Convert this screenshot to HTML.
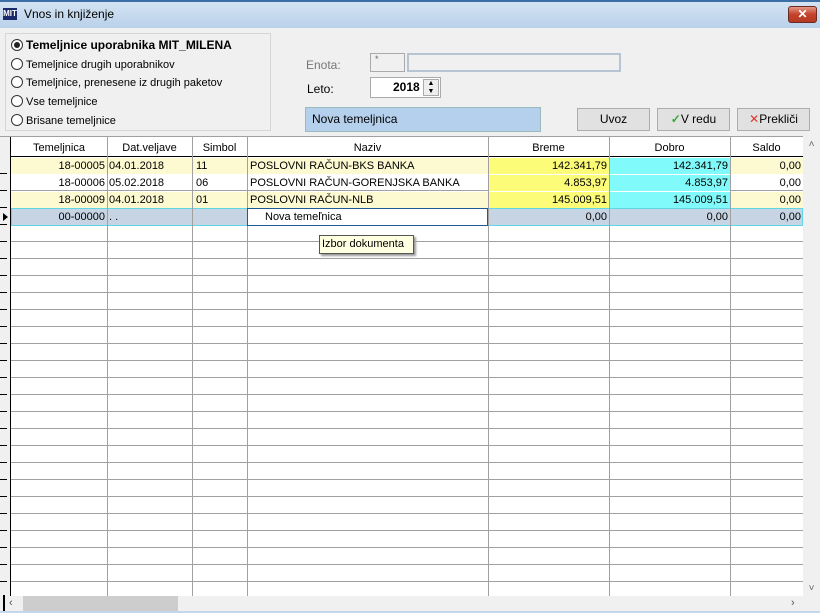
<!DOCTYPE html>
<html><head><meta charset="utf-8"><style>
*{margin:0;padding:0;box-sizing:border-box}
body{width:820px;height:613px;overflow:hidden;background:#f0f0f0;font-family:"Liberation Sans",sans-serif;font-size:11px;color:#000;position:relative}
.a{position:absolute}
.title{left:0;top:0;width:820px;height:28px;background:linear-gradient(#d4e3f3,#b9d1ea);border-top:2px solid #3a6ea5}
.grid{left:0;top:136px;width:803px;height:460px;background:#fff repeating-linear-gradient(to bottom,transparent 0,transparent 21px,#a0a0a0 21px,#a0a0a0 22px,transparent 22px,transparent 22px);}
.vl{position:absolute;top:136px;height:460px;width:1px;background:#a0a0a0}
.hl{position:absolute;left:11px;width:792px;height:1px;background:#a0a0a0}
.cell{position:absolute;height:16px;line-height:16px;white-space:nowrap;overflow:hidden;padding:0 2px}
.r{text-align:right}
.btn{position:absolute;top:108px;height:23px;background:#e1e1e1;border:1px solid #adadad;text-align:center;line-height:21px;font-size:12px}
.rad{position:absolute;left:11px;font-size:11px;line-height:13px}
.rad i{display:inline-block;width:12px;height:12px;border:1px solid #333;border-radius:50%;vertical-align:-2px;margin-right:3px;background:#fff;position:relative}
</style></head><body>
<div class="a title"></div>
<div class="a" style="left:3px;top:8px;width:14px;height:12px;background:#1a2a6c;color:#fff;font-size:8px;font-weight:bold;line-height:12px;text-align:center">MIT</div>
<div class="a" style="left:24px;top:7px;font-size:12px">Vnos in knjiženje</div>
<div class="a" style="left:788px;top:6px;width:29px;height:17px;border-radius:3px;border:1px solid #6b2a22;background:linear-gradient(#e39a88,#c4412b 50%,#b53a22);color:#fff;text-align:center;font-size:12px;font-weight:bold;line-height:15px">✕</div>

<div class="a" style="left:5px;top:33px;width:266px;height:98px;border:1px solid #d5d5d5;"></div>
<div class="rad" style="top:39px;font-weight:bold;font-size:12px"><i><b style="position:absolute;left:2px;top:2px;width:6px;height:6px;border-radius:50%;background:#222"></b></i>Temeljnice uporabnika MIT_MILENA</div>
<div class="rad" style="top:58px"><i></i>Temeljnice drugih uporabnikov</div>
<div class="rad" style="top:76px"><i></i>Temeljnice, prenesene iz drugih paketov</div>
<div class="rad" style="top:95px"><i></i>Vse temeljnice</div>
<div class="rad" style="top:114px"><i></i>Brisane temeljnice</div>

<div class="a" style="left:306px;top:58px;color:#777;font-size:12px">Enota:</div>
<div class="a" style="left:370px;top:53px;width:35px;height:19px;border:1px solid #aaa;background:#f0f0f0;color:#666;font-size:9px;padding-left:4px">*</div>
<div class="a" style="left:407px;top:53px;width:214px;height:19px;border:2px solid #b7c4d4;background:#f0f0f0"></div>
<div class="a" style="left:307px;top:82px;font-size:12px">Leto:</div>
<div class="a" style="left:370px;top:77px;width:71px;height:21px;border:1px solid #aaa;background:#fff;font-weight:bold;font-size:12px;line-height:19px;padding-left:22px">2018</div>
<div class="a" style="left:423px;top:79px;width:16px;height:17px;border:1px solid #aaa;background:#eee;font-size:7px;line-height:8px;text-align:center">▲<br>▼</div>
<div class="a" style="left:305px;top:107px;width:236px;height:25px;background:#b4d0ec;border:1px solid #9bb;font-size:12px;line-height:23px;padding-left:6px">Nova temeljnica</div>
<div class="btn" style="left:577px;width:73px">Uvoz</div>
<div class="btn" style="left:657px;width:73px"><span style="color:#3a3;font-weight:bold">✓</span>V redu</div>
<div class="btn" style="left:737px;width:73px"><span style="color:#e2342a">✕</span>Prekliči</div>

<!-- grid -->
<div class="a" style="left:0;top:136px;width:803px;height:460px;background:#fff;border-top:1px solid #a0a0a0"></div>
<div class="a" style="left:0;top:137px;width:11px;height:459px;background:#f0f0f0;border-right:1px solid #000"></div>
<div class="a" style="left:11px;top:157px;width:792px;height:439px;background:repeating-linear-gradient(to bottom,transparent 0,transparent 16px,#a0a0a0 16px,#a0a0a0 17px)"></div>
<div class="a" style="left:0;top:157px;width:7px;height:439px;background:repeating-linear-gradient(to bottom,transparent 0,transparent 16px,#000 16px,#000 17px)"></div>
<div class="a" style="left:11px;top:156px;width:792px;height:1px;background:#000"></div>
<div class="vl" style="left:107px"></div><div class="vl" style="left:192px"></div><div class="vl" style="left:247px"></div><div class="vl" style="left:488px"></div><div class="vl" style="left:609px"></div><div class="vl" style="left:730px"></div>

<!-- header -->
<div class="cell" style="left:11px;top:140px;width:96px;text-align:center">Temeljnica</div>
<div class="cell" style="left:107px;top:140px;width:85px;text-align:center">Dat.veljave</div>
<div class="cell" style="left:192px;top:140px;width:55px;text-align:center">Simbol</div>
<div class="cell" style="left:247px;top:140px;width:241px;text-align:center">Naziv</div>
<div class="cell" style="left:488px;top:140px;width:121px;text-align:center">Breme</div>
<div class="cell" style="left:609px;top:140px;width:121px;text-align:center">Dobro</div>
<div class="cell" style="left:730px;top:140px;width:73px;text-align:center">Saldo</div>

<!-- row bgs -->
<div class="a" style="left:11px;top:158px;width:792px;height:16px;background:#fdfad2"></div>
<div class="a" style="left:11px;top:192px;width:792px;height:16px;background:#fdfad2"></div>
<div class="a" style="left:11px;top:208px;width:792px;height:18px;background:#c6d4e4;border:1px solid #5fd6e6"></div>
<div class="a" style="left:488px;top:158px;width:121px;height:16px;background:#fcfc78"></div>
<div class="a" style="left:488px;top:175px;width:121px;height:16px;background:#fcfc78"></div>
<div class="a" style="left:488px;top:192px;width:121px;height:16px;background:#fcfc78"></div>
<div class="a" style="left:609px;top:158px;width:121px;height:16px;background:#80fafa"></div>
<div class="a" style="left:609px;top:175px;width:121px;height:16px;background:#80fafa"></div>
<div class="a" style="left:609px;top:192px;width:121px;height:16px;background:#80fafa"></div>
<div class="vl" style="left:107px;top:158px;height:68px"></div><div class="vl" style="left:192px;top:158px;height:68px"></div><div class="vl" style="left:247px;top:158px;height:50px"></div><div class="vl" style="left:488px;top:158px;height:68px"></div><div class="vl" style="left:609px;top:158px;height:68px"></div><div class="vl" style="left:730px;top:158px;height:68px"></div>
<div class="a" style="left:3px;top:213px;width:0;height:0;border-top:4px solid transparent;border-bottom:4px solid transparent;border-left:5px solid #000"></div>

<!-- rows -->
<div class="cell r" style="left:11px;top:158px;width:96px">18-00005</div><div class="cell" style="left:107px;top:158px">04.01.2018</div><div class="cell" style="left:194px;top:158px">11</div><div class="cell" style="left:248px;top:158px">POSLOVNI RAČUN-BKS BANKA</div><div class="cell r" style="left:488px;top:158px;width:121px">142.341,79</div><div class="cell r" style="left:609px;top:158px;width:121px">142.341,79</div><div class="cell r" style="left:730px;top:158px;width:73px">0,00</div>
<div class="cell r" style="left:11px;top:175px;width:96px">18-00006</div><div class="cell" style="left:107px;top:175px">05.02.2018</div><div class="cell" style="left:194px;top:175px">06</div><div class="cell" style="left:248px;top:175px">POSLOVNI RAČUN-GORENJSKA BANKA</div><div class="cell r" style="left:488px;top:175px;width:121px">4.853,97</div><div class="cell r" style="left:609px;top:175px;width:121px">4.853,97</div><div class="cell r" style="left:730px;top:175px;width:73px">0,00</div>
<div class="cell r" style="left:11px;top:192px;width:96px">18-00009</div><div class="cell" style="left:107px;top:192px">04.01.2018</div><div class="cell" style="left:194px;top:192px">01</div><div class="cell" style="left:248px;top:192px">POSLOVNI RAČUN-NLB</div><div class="cell r" style="left:488px;top:192px;width:121px">145.009,51</div><div class="cell r" style="left:609px;top:192px;width:121px">145.009,51</div><div class="cell r" style="left:730px;top:192px;width:73px">0,00</div>
<div class="cell r" style="left:11px;top:209px;width:96px">00-00000</div><div class="cell" style="left:107px;top:209px">. .</div><div class="cell r" style="left:488px;top:209px;width:121px">0,00</div><div class="cell r" style="left:609px;top:209px;width:121px">0,00</div><div class="cell r" style="left:730px;top:209px;width:73px">0,00</div>
<div class="a" style="left:247px;top:208px;width:241px;height:18px;background:#fff;border:1px solid #1e5a9a;padding-left:17px;line-height:16px">Nova temeľnica</div>
<div class="a" style="left:319px;top:235px;width:95px;height:19px;background:#ffffe1;border:1px solid #555;box-shadow:2px 2px 2px #999;line-height:17px;padding-left:2px">Izbor dokumenta</div>

<!-- scrollbars -->
<div class="a" style="left:803px;top:136px;width:17px;height:460px;background:#f0f0f0;color:#666;font-size:10px;text-align:center"><div style="margin-top:3px">˄</div><div style="position:absolute;bottom:2px;width:17px">˅</div></div>
<div class="a" style="left:0;top:596px;width:820px;height:17px;background:#f0f0f0"></div>
<div class="a" style="left:3px;top:595px;width:2px;height:18px;background:#000"></div>
<div class="a" style="left:9px;top:597px;color:#555;font-size:11px">‹</div>
<div class="a" style="left:23px;top:596px;width:155px;height:15px;background:#cdcdcd"></div>
<div class="a" style="left:791px;top:597px;color:#555;font-size:11px">›</div>
<div class="a" style="left:0;top:611px;width:820px;height:2px;background:#c5d7ea"></div>
</body></html>
